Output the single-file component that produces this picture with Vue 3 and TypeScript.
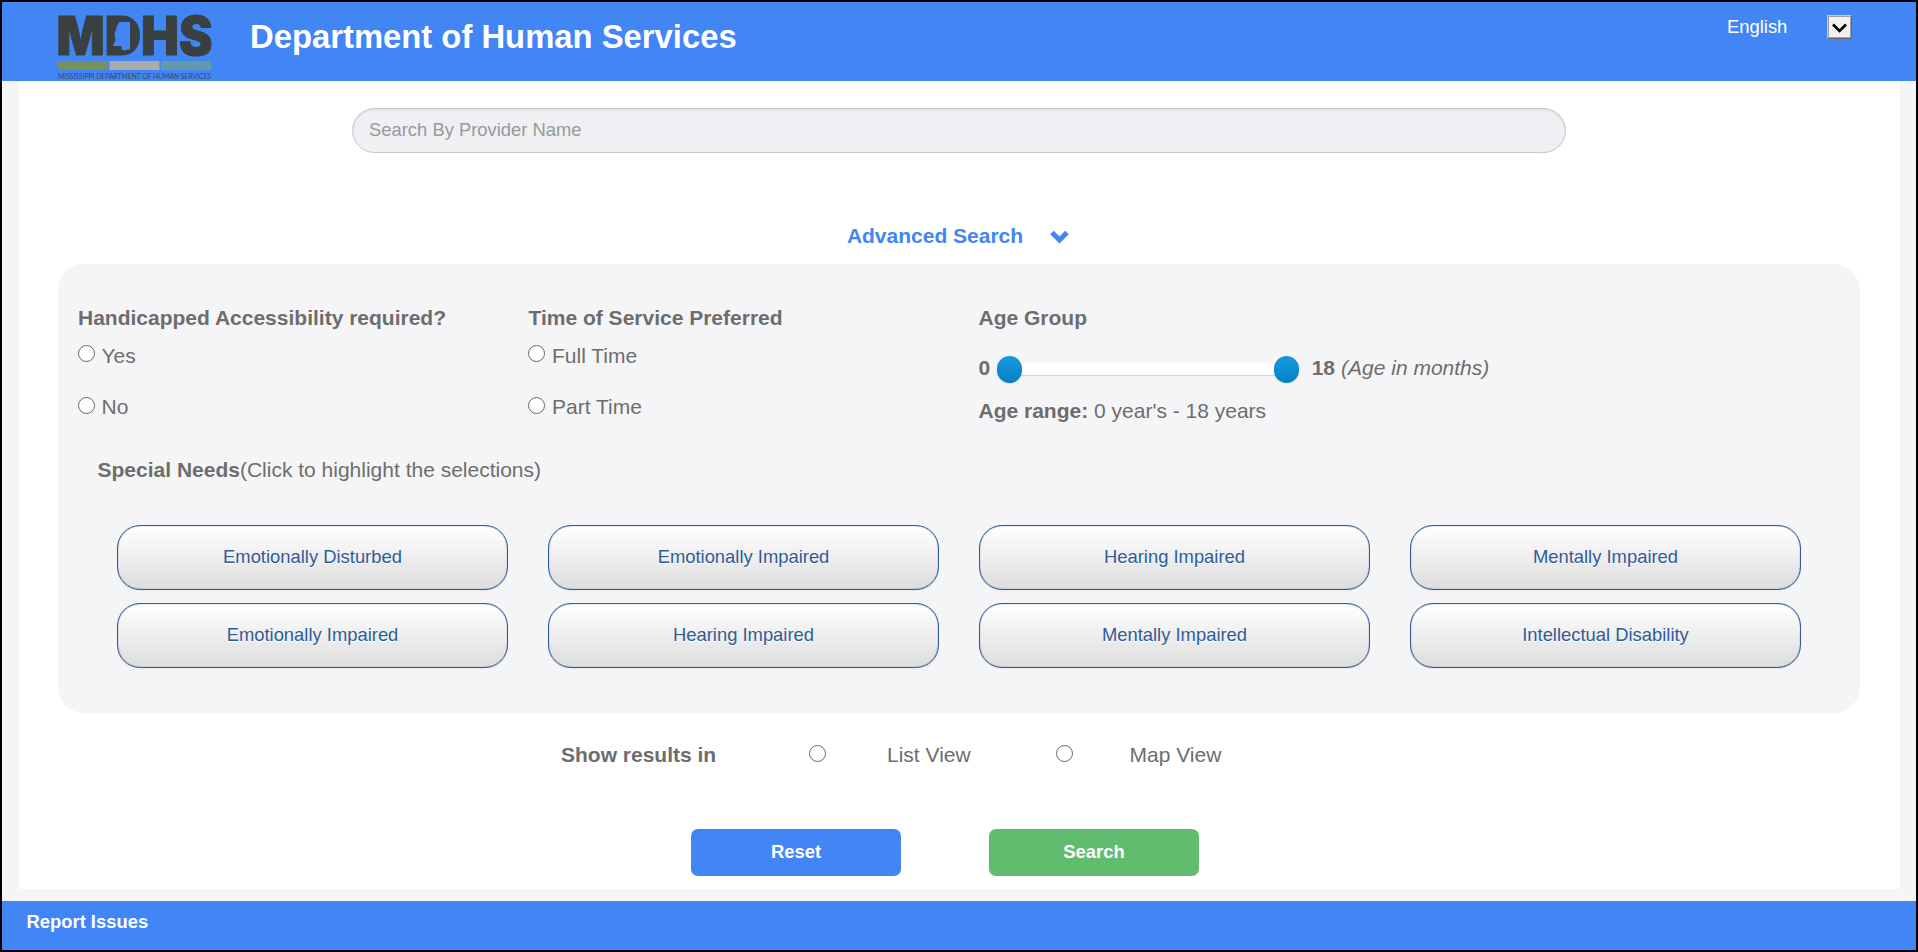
<script setup lang="ts">
import { ref } from 'vue'

const provider = ref('')
const access = ref('')
const service = ref('')
const view = ref('')
const selected = ref<number[]>([])

const needs: string[] = [
  'Emotionally Disturbed',
  'Emotionally Impaired',
  'Hearing Impaired',
  'Mentally Impaired',
  'Emotionally Impaired',
  'Hearing Impaired',
  'Mentally Impaired',
  'Intellectual Disability',
]

function toggle(index: number): void {
  selected.value = selected.value.includes(index)
    ? selected.value.filter((i) => i !== index)
    : [...selected.value, index]
}

function reset(): void {
  provider.value = ''
  access.value = ''
  service.value = ''
  view.value = ''
  selected.value = []
}
</script>

<template>
  <div class="page">
    <header class="header">
      <svg class="logo" viewBox="-6 -12 170 79" width="170" height="79">
        <text class="letters" x="-1.5" y="41" textLength="156" lengthAdjust="spacingAndGlyphs">MDHS</text>
        <path class="dark" d="M53 5H67L77 12V30L67 38H53Z" />
        <path class="state" d="M61.5 8H72V35L66 36.5L63.5 35V32H55L57.5 26L56.500 20L59 12Z" />
        <rect x="0" y="47" width="50" height="9" fill="#76905e" />
        <rect x="51.500" y="47" width="50" height="9" fill="#ababac" />
        <rect x="103" y="47" width="50" height="9" fill="#6498ad" />
        <text class="tag" x="0" y="64.500" textLength="153" lengthAdjust="spacingAndGlyphs">MISSISSIPPI DEPARTMENT OF HUMAN SERVICES</text>
      </svg>
      <h1 class="title">Department of Human Services</h1>
      <div class="language">
        <span>English</span>
        <button class="arrow" aria-label="Choose language">
          <svg width="15" height="11" viewBox="0 0 15 11"><path d="M1 1.500L7.500 8L14 1.500" fill="none" stroke="#000" stroke-width="2.600" /></svg>
        </button>
      </div>
    </header>

    <main class="content">
      <input v-model="provider" class="search" type="text" placeholder="Search By Provider Name" />

      <div class="advanced">
        <span>Advanced Search</span>
        <svg width="19" height="14" viewBox="0 0 19 14"><path d="M2 2.500L9.500 10L17 2.500" fill="none" stroke="#4286f5" stroke-width="5" /></svg>
      </div>

      <section class="panel">
        <div class="filters">
          <div>
            <h2>Handicapped Accessibility required?</h2>
            <label class="option"><input v-model="access" type="radio" value="yes" />Yes</label>
            <label class="option"><input v-model="access" type="radio" value="no" />No</label>
          </div>
          <div>
            <h2>Time of Service Preferred</h2>
            <label class="option"><input v-model="service" type="radio" value="full" />Full Time</label>
            <label class="option"><input v-model="service" type="radio" value="part" />Part Time</label>
          </div>
          <div class="age">
            <h2>Age Group</h2>
            <div class="range">
              <b>0</b>
              <div class="slider">
                <span class="knob"></span>
                <span class="track"></span>
                <span class="knob"></span>
              </div>
              <b>18</b>
              <i>(Age in months)</i>
            </div>
            <p><b>Age range:</b> 0 year's - 18 years</p>
          </div>
        </div>

        <p class="needs-title"><b>Special Needs</b>(Click to highlight the selections)</p>
        <div class="needs">
          <button
            v-for="(need, index) in needs"
            :key="index"
            class="need"
            :class="{ active: selected.includes(index) }"
            @click="toggle(index)"
          >{{ need }}</button>
        </div>
      </section>

      <div class="results">
        <b>Show results in</b>
        <label><input v-model="view" type="radio" value="list" />List View</label>
        <label><input v-model="view" type="radio" value="map" />Map View</label>
      </div>

      <div class="actions">
        <button class="reset" @click="reset">Reset</button>
        <button class="submit">Search</button>
      </div>
    </main>

    <footer class="footer">Report Issues</footer>
  </div>
</template>

<style>
body {
  margin: 0;
}
</style>

<style scoped>
.page {
  box-sizing: border-box;
  display: flex;
  flex-direction: column;
  width: 1918px;
  height: 952px;
  border: 2px solid #000;
  background: #f5f5f8;
  color: #6d6d6d;
  font: 21px/24px "Liberation Sans", Arial, sans-serif;
}
.page * {
  box-sizing: border-box;
}
h1,
h2,
p {
  margin: 0;
}
button {
  padding: 0;
  font-family: inherit;
  cursor: pointer;
}
.header {
  display: flex;
  align-items: flex-start;
  flex: none;
  height: 79px;
  padding: 0 64px 0 50px;
  background: #4286f5;
  color: #fff;
}
.logo {
  flex: none;
  overflow: visible;
}
.letters {
  font: 900 53px Inter, sans-serif;
  fill: #3a4041;
  stroke: #3a4041;
  stroke-width: 1px;
}
.dark {
  fill: #3a4041;
}
.state {
  fill: #4286f5;
}
.tag {
  font: 7px Lato, sans-serif;
  fill: #34466b;
}
.title {
  margin: 16px 0 0 28px;
  font-size: 32.8px;
  line-height: 38px;
}
.language {
  display: flex;
  justify-content: space-between;
  width: 125px;
  margin: 13px 0 0 auto;
  font-size: 18.4px;
  line-height: 24px;
}
.arrow {
  display: flex;
  align-items: center;
  justify-content: center;
  width: 25px;
  height: 24px;
  border: 1px solid #c8c8c8;
  border-right-color: #696969;
  border-bottom-color: #696969;
  background: #f0f0f0;
  box-shadow: inset -1px -1px #a0a0a0, inset 1px 1px #a0a0a0;
}
.arrow svg {
  margin-top: 2px;
}
.content {
  flex: none;
  display: flex;
  flex-direction: column;
  height: 808px;
  margin: 0 16px 0 17px;
  padding: 27px 40px 0 39px;
  background: #fff;
}
.search {
  flex: none;
  align-self: center;
  width: 1214px;
  height: 45px;
  padding: 0 16px 2px;
  border: 1px solid #c8c8c8;
  border-radius: 23px;
  outline: none;
  background: #f0eff4;
  box-shadow: inset 0 1px 2px rgba(0, 0, 0, 0.1);
  color: #555;
  font: 18.4px "Liberation Sans", Arial, sans-serif;
}
.search::placeholder {
  color: #999;
  opacity: 1;
}
.advanced {
  display: flex;
  align-items: center;
  justify-content: center;
  gap: 27px;
  height: 24px;
  margin: 71px 2px 0 0;
  color: #4286f5;
  font-weight: bold;
}
.advanced svg {
  margin-top: 2px;
}
.panel {
  flex: none;
  height: 449px;
  margin-top: 16px;
  padding-top: 42px;
  border-radius: 26px;
  background: #f5f5f8;
}
.filters {
  display: grid;
  grid-template-columns: repeat(4, minmax(0, 1fr));
  height: 152px;
}
.filters > div {
  padding-left: 20px;
}
.filters > .age {
  padding-left: 19.5px;
}
h2 {
  font-size: 21px;
  line-height: 24px;
}
.option {
  display: flex;
  height: 24px;
  margin-top: 14px;
}
.option + .option {
  margin-top: 27px;
}
.option input {
  margin: 1px 7px 0 -0.5px;
}
.option + .option input {
  margin-top: 2px;
}
input[type='radio'] {
  flex: none;
  appearance: none;
  width: 17px;
  height: 17px;
  border: 1px solid #666;
  border-radius: 50%;
  background: #fff;
}
input[type='radio']:checked {
  background: radial-gradient(#333 0 4px, #fff 5px);
}
.range {
  display: flex;
  height: 27px;
  margin-top: 25px;
  white-space: nowrap;
}
.range b,
.range i {
  padding-top: 1px;
}
.slider {
  display: flex;
  flex: none;
  align-items: flex-start;
  width: 302px;
  margin: 1px 12.5px 0 7px;
}
.knob {
  position: relative;
  z-index: 1;
  flex: none;
  width: 25px;
  height: 27px;
  border-radius: 13px;
  background: linear-gradient(#1699e0, #0580c2);
  box-shadow: 0 1px 2px rgba(0, 0, 0, 0.12);
}
.track {
  flex: 1;
  height: 13px;
  margin: 7px -8px 0;
  border-bottom: 1px solid #d2d2d2;
  background: #fff;
}
.range i {
  margin-left: 6px;
}
.age p {
  margin-top: 17px;
}
.needs-title {
  padding-left: 39.5px;
}
.needs {
  display: grid;
  grid-template-columns: repeat(4, 391px);
  gap: 13px 40px;
  margin: 43px 0 0 59px;
}
.need {
  height: 65px;
  padding-bottom: 2px;
  border: 1px solid #2f5b97;
  border-radius: 23px;
  background: linear-gradient(#fff, #ddd);
  box-shadow: 0 1px 2px rgba(0, 0, 0, 0.06), inset 0 0 1px #2f5b97;
  color: #2f5b97;
  font-size: 18.4px;
  text-shadow: 0 1px 0 #fff;
}
.need.active {
  background: #c9dcfa;
}
.results {
  display: flex;
  height: 24px;
  margin: 30px 0 0 503px;
}
.results b {
  width: 248px;
}
.results label {
  display: flex;
  width: 247px;
}
.results label input {
  margin: 2px 61px 0 0;
}
.results label + label input {
  margin-right: 56.5px;
}
.actions {
  display: flex;
  gap: 88px;
  margin: 62px 0 0 633px;
}
.actions button {
  width: 210px;
  height: 47px;
  padding-bottom: 2px;
  border: 0;
  border-radius: 7px;
  background: #4286f5;
  color: #fff;
  font-size: 18.4px;
  font-weight: bold;
}
.actions .submit {
  background: #62bc6f;
}
.footer {
  flex: none;
  height: 49px;
  margin-top: 12px;
  padding: 10px 24.5px;
  background: #4286f5;
  color: #fff;
  font-size: 18.4px;
  font-weight: bold;
  line-height: 22px;
}
</style>
